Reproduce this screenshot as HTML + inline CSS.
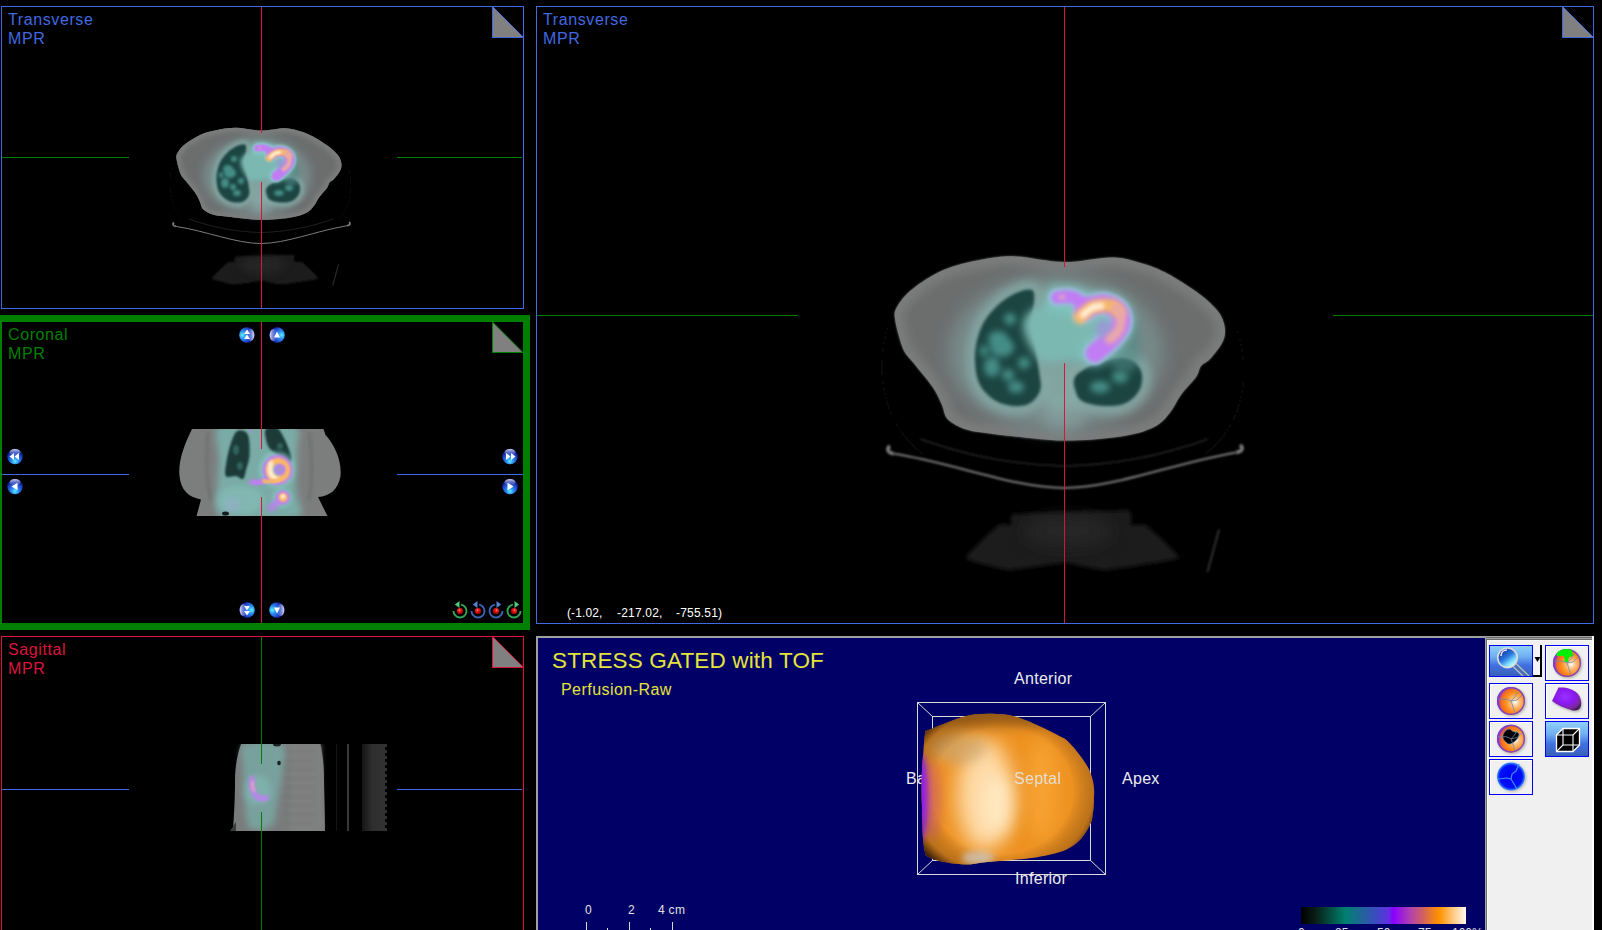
<!DOCTYPE html>
<html><head><meta charset="utf-8">
<style>
html,body{margin:0;padding:0;background:#000;width:1602px;height:930px;overflow:hidden;position:relative;font-family:"Liberation Sans",sans-serif;}
.a{position:absolute;box-sizing:border-box;}
.lbl{position:absolute;font-size:16px;line-height:19px;letter-spacing:0.6px;white-space:nowrap;}
.hl{position:absolute;height:1px;}
.vl{position:absolute;width:1px;}
svg{position:absolute;overflow:visible;}
.t{position:absolute;white-space:nowrap;}
</style></head><body>

<svg width="0" height="0" style="left:0;top:0">
 <defs>
  <radialGradient id="nbH" cx="50%" cy="80%" r="65%">
   <stop offset="0" stop-color="#5ff0ff"/>
   <stop offset="0.35" stop-color="#2a8cf0"/>
   <stop offset="0.75" stop-color="#2040c8"/>
   <stop offset="1" stop-color="#0a1a80"/>
  </radialGradient>
  <linearGradient id="nbHi" x1="0" y1="0" x2="0" y2="1">
   <stop offset="0" stop-color="#e8e8ff" stop-opacity="0.9"/>
   <stop offset="1" stop-color="#8090e0" stop-opacity="0"/>
  </linearGradient>
  <radialGradient id="nbV1" cx="20%" cy="50%" r="70%">
   <stop offset="0" stop-color="#5ff0ff"/>
   <stop offset="0.35" stop-color="#2a8cf0"/>
   <stop offset="0.75" stop-color="#2040c8"/>
   <stop offset="1" stop-color="#0a1a80"/>
  </radialGradient>
  <linearGradient id="nbViR" x1="1" y1="0" x2="0" y2="0">
   <stop offset="0" stop-color="#f0f0ff" stop-opacity="0.95"/>
   <stop offset="1" stop-color="#8090e0" stop-opacity="0"/>
  </linearGradient>
  <radialGradient id="nbV2" cx="80%" cy="50%" r="70%">
   <stop offset="0" stop-color="#5ff0ff"/>
   <stop offset="0.35" stop-color="#2a8cf0"/>
   <stop offset="0.75" stop-color="#2040c8"/>
   <stop offset="1" stop-color="#0a1a80"/>
  </radialGradient>
  <linearGradient id="nbViL" x1="0" y1="0" x2="1" y2="0">
   <stop offset="0" stop-color="#f0f0ff" stop-opacity="0.95"/>
   <stop offset="1" stop-color="#8090e0" stop-opacity="0"/>
  </linearGradient>
  <radialGradient id="ball" cx="40%" cy="35%" r="60%">
   <stop offset="0" stop-color="#ffb0b0"/>
   <stop offset="0.3" stop-color="#ff2020"/>
   <stop offset="1" stop-color="#a00000"/>
  </radialGradient>

  <filter id="bl05" x="-100%" y="-100%" width="300%" height="300%"><feGaussianBlur stdDeviation="0.5"/></filter>
  <filter id="bl06" x="-100%" y="-100%" width="300%" height="300%"><feGaussianBlur stdDeviation="0.6"/></filter>
  <filter id="bl08" x="-100%" y="-100%" width="300%" height="300%"><feGaussianBlur stdDeviation="0.8"/></filter>
  <filter id="bl1" x="-100%" y="-100%" width="300%" height="300%"><feGaussianBlur stdDeviation="1"/></filter>
  <filter id="bl12" x="-100%" y="-100%" width="300%" height="300%"><feGaussianBlur stdDeviation="1.2"/></filter>
  <filter id="bl15" x="-100%" y="-100%" width="300%" height="300%"><feGaussianBlur stdDeviation="1.5"/></filter>
  <filter id="bl2" x="-100%" y="-100%" width="300%" height="300%"><feGaussianBlur stdDeviation="2"/></filter>
  <filter id="bl3" x="-100%" y="-100%" width="300%" height="300%"><feGaussianBlur stdDeviation="3"/></filter>
  <filter id="bl4" x="-100%" y="-100%" width="300%" height="300%"><feGaussianBlur stdDeviation="4"/></filter>
  <filter id="bl6" x="-100%" y="-100%" width="300%" height="300%"><feGaussianBlur stdDeviation="6"/></filter>
  <filter id="bl8" x="-100%" y="-100%" width="300%" height="300%"><feGaussianBlur stdDeviation="8"/></filter>
  <filter id="bl10" x="-100%" y="-100%" width="300%" height="300%"><feGaussianBlur stdDeviation="10"/></filter>
<g id="tbody">
<path d="M -88,5 C -95,30 -90,55 -70,70 M 86,5 C 94,30 90,55 70,70" fill="none" stroke="#0e0e0e" stroke-width="0.7" filter="url(#bl05)"/>
<clipPath id="torsoClip"><path d="M -76.00,-12.80 C -72.08,-15.90 -65.75,-20.13 -60.00,-22.60 C -54.25,-25.07 -47.50,-26.48 -41.50,-27.60 C -35.50,-28.72 -30.92,-29.48 -24.00,-29.30 C -17.08,-29.12 -8.08,-26.58 0.00,-26.50 C 8.08,-26.42 17.83,-28.97 24.50,-28.80 C 31.17,-28.63 35.42,-26.88 40.00,-25.50 C 44.58,-24.12 47.67,-22.80 52.00,-20.50 C 56.33,-18.20 62.33,-14.28 66.00,-11.70 C 69.67,-9.12 71.92,-7.03 74.00,-5.00 C 76.08,-2.97 77.42,-1.58 78.50,0.50 C 79.58,2.58 80.42,5.25 80.50,7.50 C 80.58,9.75 80.25,11.58 79.00,14.00 C 77.75,16.42 74.75,20.08 73.00,22.00 C 71.25,23.92 69.67,24.00 68.50,25.50 C 67.33,27.00 67.68,28.58 66.00,31.00 C 64.32,33.42 60.57,37.04 58.40,40.00 C 56.23,42.96 55.23,46.08 53.00,48.75 C 50.77,51.42 49.08,54.00 45.00,56.00 C 40.92,58.00 36.00,59.62 28.50,60.75 C 21.00,61.88 8.83,62.80 0.00,62.80 C -8.83,62.80 -18.33,61.34 -24.50,60.75 C -30.67,60.16 -33.03,59.81 -37.00,59.25 C -40.97,58.69 -44.80,58.57 -48.30,57.40 C -51.80,56.23 -55.85,54.35 -58.00,52.20 C -60.15,50.05 -59.92,47.20 -61.20,44.50 C -62.48,41.80 -63.33,39.45 -65.70,36.00 C -68.07,32.55 -72.93,27.02 -75.40,23.80 C -77.87,20.58 -79.00,20.25 -80.50,16.70 C -82.00,13.15 -83.90,5.95 -84.40,2.50 C -84.90,-0.95 -84.90,-1.45 -83.50,-4.00 C -82.10,-6.55 -79.92,-9.70 -76.00,-12.80 Z"/></clipPath>
<path d="M -76.00,-12.80 C -72.08,-15.90 -65.75,-20.13 -60.00,-22.60 C -54.25,-25.07 -47.50,-26.48 -41.50,-27.60 C -35.50,-28.72 -30.92,-29.48 -24.00,-29.30 C -17.08,-29.12 -8.08,-26.58 0.00,-26.50 C 8.08,-26.42 17.83,-28.97 24.50,-28.80 C 31.17,-28.63 35.42,-26.88 40.00,-25.50 C 44.58,-24.12 47.67,-22.80 52.00,-20.50 C 56.33,-18.20 62.33,-14.28 66.00,-11.70 C 69.67,-9.12 71.92,-7.03 74.00,-5.00 C 76.08,-2.97 77.42,-1.58 78.50,0.50 C 79.58,2.58 80.42,5.25 80.50,7.50 C 80.58,9.75 80.25,11.58 79.00,14.00 C 77.75,16.42 74.75,20.08 73.00,22.00 C 71.25,23.92 69.67,24.00 68.50,25.50 C 67.33,27.00 67.68,28.58 66.00,31.00 C 64.32,33.42 60.57,37.04 58.40,40.00 C 56.23,42.96 55.23,46.08 53.00,48.75 C 50.77,51.42 49.08,54.00 45.00,56.00 C 40.92,58.00 36.00,59.62 28.50,60.75 C 21.00,61.88 8.83,62.80 0.00,62.80 C -8.83,62.80 -18.33,61.34 -24.50,60.75 C -30.67,60.16 -33.03,59.81 -37.00,59.25 C -40.97,58.69 -44.80,58.57 -48.30,57.40 C -51.80,56.23 -55.85,54.35 -58.00,52.20 C -60.15,50.05 -59.92,47.20 -61.20,44.50 C -62.48,41.80 -63.33,39.45 -65.70,36.00 C -68.07,32.55 -72.93,27.02 -75.40,23.80 C -77.87,20.58 -79.00,20.25 -80.50,16.70 C -82.00,13.15 -83.90,5.95 -84.40,2.50 C -84.90,-0.95 -84.90,-1.45 -83.50,-4.00 C -82.10,-6.55 -79.92,-9.70 -76.00,-12.80 Z" fill="#6c6e6e" filter="url(#bl06)"/>
<g clip-path="url(#torsoClip)"><path d="M -76.00,-12.80 C -72.08,-15.90 -65.75,-20.13 -60.00,-22.60 C -54.25,-25.07 -47.50,-26.48 -41.50,-27.60 C -35.50,-28.72 -30.92,-29.48 -24.00,-29.30 C -17.08,-29.12 -8.08,-26.58 0.00,-26.50 C 8.08,-26.42 17.83,-28.97 24.50,-28.80 C 31.17,-28.63 35.42,-26.88 40.00,-25.50 C 44.58,-24.12 47.67,-22.80 52.00,-20.50 C 56.33,-18.20 62.33,-14.28 66.00,-11.70 C 69.67,-9.12 71.92,-7.03 74.00,-5.00 C 76.08,-2.97 77.42,-1.58 78.50,0.50 C 79.58,2.58 80.42,5.25 80.50,7.50 C 80.58,9.75 80.25,11.58 79.00,14.00 C 77.75,16.42 74.75,20.08 73.00,22.00 C 71.25,23.92 69.67,24.00 68.50,25.50 C 67.33,27.00 67.68,28.58 66.00,31.00 C 64.32,33.42 60.57,37.04 58.40,40.00 C 56.23,42.96 55.23,46.08 53.00,48.75 C 50.77,51.42 49.08,54.00 45.00,56.00 C 40.92,58.00 36.00,59.62 28.50,60.75 C 21.00,61.88 8.83,62.80 0.00,62.80 C -8.83,62.80 -18.33,61.34 -24.50,60.75 C -30.67,60.16 -33.03,59.81 -37.00,59.25 C -40.97,58.69 -44.80,58.57 -48.30,57.40 C -51.80,56.23 -55.85,54.35 -58.00,52.20 C -60.15,50.05 -59.92,47.20 -61.20,44.50 C -62.48,41.80 -63.33,39.45 -65.70,36.00 C -68.07,32.55 -72.93,27.02 -75.40,23.80 C -77.87,20.58 -79.00,20.25 -80.50,16.70 C -82.00,13.15 -83.90,5.95 -84.40,2.50 C -84.90,-0.95 -84.90,-1.45 -83.50,-4.00 C -82.10,-6.55 -79.92,-9.70 -76.00,-12.80 Z" fill="none" stroke="#7a7c7c" stroke-width="9" filter="url(#bl2)"/></g>
<ellipse cx="-4" cy="19" rx="54" ry="39" fill="#7fa09e" opacity="0.55" filter="url(#bl4)"/>
<ellipse cx="0" cy="48" rx="12" ry="10" fill="#8aa6a4" opacity="0.5" filter="url(#bl3)"/>
<ellipse cx="-1" cy="34" rx="11" ry="15" fill="#86aca8" opacity="0.75" filter="url(#bl3)"/>
<path d="M -16.00,-12.50 C -17.50,-13.33 -21.17,-12.25 -24.00,-11.00 C -26.83,-9.75 -30.17,-7.73 -33.00,-5.00 C -35.83,-2.27 -39.08,1.23 -41.00,5.40 C -42.92,9.57 -44.33,15.07 -44.50,20.00 C -44.67,24.93 -44.08,31.00 -42.00,35.00 C -39.92,39.00 -35.83,42.33 -32.00,44.00 C -28.17,45.67 -22.33,46.00 -19.00,45.00 C -15.67,44.00 -13.08,40.83 -12.00,38.00 C -10.92,35.17 -12.08,31.83 -12.50,28.00 C -12.92,24.17 -13.83,19.17 -14.50,15.00 C -15.17,10.83 -16.42,6.50 -16.50,3.00 C -16.58,-0.50 -15.08,-3.42 -15.00,-6.00 C -14.92,-8.58 -14.50,-11.67 -16.00,-12.50 Z" fill="none" stroke="#88aeaa" stroke-width="9" opacity="0.7" filter="url(#bl2)"/>
<path d="M 5.50,31.00 C 6.58,29.17 9.58,27.42 12.00,26.00 C 14.42,24.58 16.67,23.17 20.00,22.50 C 23.33,21.83 28.92,21.08 32.00,22.00 C 35.08,22.92 37.50,25.50 38.50,28.00 C 39.50,30.50 39.25,34.33 38.00,37.00 C 36.75,39.67 34.00,42.58 31.00,44.00 C 28.00,45.42 23.67,45.67 20.00,45.50 C 16.33,45.33 11.42,44.42 9.00,43.00 C 6.58,41.58 6.08,39.00 5.50,37.00 C 4.92,35.00 4.42,32.83 5.50,31.00 Z" fill="none" stroke="#88aeaa" stroke-width="9" opacity="0.7" filter="url(#bl2)"/>
<path d="M -16.00,-12.50 C -17.50,-13.33 -21.17,-12.25 -24.00,-11.00 C -26.83,-9.75 -30.17,-7.73 -33.00,-5.00 C -35.83,-2.27 -39.08,1.23 -41.00,5.40 C -42.92,9.57 -44.33,15.07 -44.50,20.00 C -44.67,24.93 -44.08,31.00 -42.00,35.00 C -39.92,39.00 -35.83,42.33 -32.00,44.00 C -28.17,45.67 -22.33,46.00 -19.00,45.00 C -15.67,44.00 -13.08,40.83 -12.00,38.00 C -10.92,35.17 -12.08,31.83 -12.50,28.00 C -12.92,24.17 -13.83,19.17 -14.50,15.00 C -15.17,10.83 -16.42,6.50 -16.50,3.00 C -16.58,-0.50 -15.08,-3.42 -15.00,-6.00 C -14.92,-8.58 -14.50,-11.67 -16.00,-12.50 Z" fill="#1d4543" filter="url(#bl08)"/>
<path d="M 5.50,31.00 C 6.58,29.17 9.58,27.42 12.00,26.00 C 14.42,24.58 16.67,23.17 20.00,22.50 C 23.33,21.83 28.92,21.08 32.00,22.00 C 35.08,22.92 37.50,25.50 38.50,28.00 C 39.50,30.50 39.25,34.33 38.00,37.00 C 36.75,39.67 34.00,42.58 31.00,44.00 C 28.00,45.42 23.67,45.67 20.00,45.50 C 16.33,45.33 11.42,44.42 9.00,43.00 C 6.58,41.58 6.08,39.00 5.50,37.00 C 4.92,35.00 4.42,32.83 5.50,31.00 Z" fill="#1d4543" filter="url(#bl08)"/>
<g fill="#4a948e" filter="url(#bl15)" opacity="0.9"><ellipse cx="-33" cy="12" rx="5" ry="4"/><ellipse cx="-36" cy="26" rx="4" ry="5"/><ellipse cx="-28" cy="30" rx="3" ry="3"/><ellipse cx="-40" cy="18" rx="2" ry="3"/><ellipse cx="-24" cy="36" rx="4" ry="3"/><ellipse cx="-20" cy="24" rx="3" ry="3"/><ellipse cx="-27" cy="2" rx="3" ry="3"/><ellipse cx="-31" cy="16" rx="6" ry="5"/><ellipse cx="18" cy="36" rx="5" ry="3"/><ellipse cx="28" cy="31" rx="4" ry="3"/></g>
<path d="M 22.00,-2.00 C 23.67,-4.83 27.67,-6.17 30.00,-5.00 C 32.33,-3.83 34.67,0.83 36.00,5.00 C 37.33,9.17 38.33,16.17 38.00,20.00 C 37.67,23.83 36.33,27.00 34.00,28.00 C 31.67,29.00 26.33,28.67 24.00,26.00 C 21.67,23.33 20.33,16.67 20.00,12.00 C 19.67,7.33 20.33,0.83 22.00,-2.00 Z" fill="#4f8a86" opacity="0.6" filter="url(#bl2)"/>
<path d="M -9.75,-6.00 C -7.50,-7.93 -7.54,-11.82 -4.00,-12.80 C -0.46,-13.78 6.65,-12.53 11.50,-11.90 C 16.35,-11.27 21.55,-10.94 25.10,-9.00 C 28.65,-7.06 31.83,-3.65 32.80,-0.25 C 33.77,3.15 33.00,7.69 30.90,11.40 C 28.80,15.11 23.43,19.90 20.20,22.00 C 16.97,24.10 14.87,23.83 11.50,24.00 C 8.13,24.17 3.54,23.00 0.00,23.00 C -3.54,23.00 -7.00,25.13 -9.75,24.00 C -12.50,22.87 -14.72,19.27 -16.50,16.20 C -18.27,13.13 -20.23,8.50 -20.40,5.60 C -20.57,2.70 -19.27,0.73 -17.50,-1.20 C -15.72,-3.13 -12.00,-4.07 -9.75,-6.00 Z" fill="#7cb8b2" filter="url(#bl2)"/>
<path d="M -4.00,-9.00 C -2.38,-8.83 3.43,-8.97 5.70,-8.00 C 7.97,-7.03 8.30,-3.96 9.60,-3.15 C 10.90,-2.34 11.73,-2.83 13.50,-3.15 C 15.27,-3.47 17.95,-5.26 20.20,-5.10 C 22.45,-4.94 25.70,-3.82 27.00,-2.20 C 28.30,-0.58 28.48,2.33 28.00,4.60 C 27.52,6.87 26.20,8.98 24.10,11.40 C 22.00,13.82 16.85,17.82 15.40,19.10 " fill="none" stroke="#86dcd2" stroke-width="14" stroke-linecap="round" stroke-linejoin="round" opacity="0.4" filter="url(#bl2)"/>
<path d="M -3.50,-8.80 C -2.42,-8.87 1.08,-9.50 3.00,-9.20 C 4.92,-8.90 6.67,-7.87 8.00,-7.00 C 9.33,-6.13 10.50,-4.50 11.00,-4.00 " fill="none" stroke="#84d8cc" stroke-width="8.5" stroke-linecap="round" stroke-linejoin="round" filter="url(#bl08)"/>
<path d="M 10.00,-2.00 C 10.67,-2.42 12.30,-3.90 14.00,-4.50 C 15.70,-5.10 18.03,-5.98 20.20,-5.60 C 22.37,-5.22 25.62,-3.90 27.00,-2.20 C 28.38,-0.50 28.98,2.33 28.50,4.60 C 28.02,6.87 26.28,8.98 24.10,11.40 C 21.92,13.82 16.85,17.82 15.40,19.10 " fill="none" stroke="#84d8cc" stroke-width="11.5" stroke-linecap="round" stroke-linejoin="round" filter="url(#bl08)"/>
<path d="M -3.50,-8.80 C -2.42,-8.87 1.08,-9.50 3.00,-9.20 C 4.92,-8.90 6.67,-7.87 8.00,-7.00 C 9.33,-6.13 10.50,-4.50 11.00,-4.00 " fill="none" stroke="#c27cf4" stroke-width="7" stroke-linecap="round" stroke-linejoin="round" filter="url(#bl12)"/>
<path d="M 10.00,-2.00 C 10.67,-2.42 12.30,-3.90 14.00,-4.50 C 15.70,-5.10 18.03,-5.98 20.20,-5.60 C 22.37,-5.22 25.62,-3.90 27.00,-2.20 C 28.38,-0.50 28.98,2.33 28.50,4.60 C 28.02,6.87 26.28,8.98 24.10,11.40 C 21.92,13.82 16.85,17.82 15.40,19.10 " fill="none" stroke="#c27cf4" stroke-width="10" stroke-linecap="round" stroke-linejoin="round" filter="url(#bl12)"/>
<ellipse cx="-1" cy="-9" rx="2" ry="1.5" fill="#e0a0c8" opacity="0.7" filter="url(#bl08)"/>
<ellipse cx="20" cy="7" rx="4.5" ry="5" fill="#9a96d4" opacity="0.85" filter="url(#bl15)"/>
<path d="M 8.00,1.20 C 9.08,0.33 11.83,-3.03 14.50,-4.00 C 17.17,-4.97 21.83,-5.02 24.00,-4.60 C 26.17,-4.18 26.92,-2.02 27.50,-1.50 " fill="none" stroke="#f8b868" stroke-width="6.5" stroke-linecap="round" stroke-linejoin="round" filter="url(#bl12)"/>
<path d="M 26.00,-3.50 C 26.43,-2.93 28.37,-1.95 28.60,-0.10 C 28.83,1.75 28.35,5.55 27.40,7.60 C 26.45,9.65 23.65,11.43 22.90,12.20 " fill="none" stroke="#eaa8a8" stroke-width="4.8" stroke-linecap="round" stroke-linejoin="round" filter="url(#bl12)"/>
<path d="M 9.50,0.00 C 10.25,-0.60 12.50,-2.83 14.00,-3.60 C 15.50,-4.37 17.75,-4.43 18.50,-4.60 " fill="none" stroke="#fff0dc" stroke-width="3.2" stroke-linecap="round" filter="url(#bl1)"/>
<path d="M -85,69.4 C -55,74 -25,86.5 0,86.5 C 25,86.5 55,74 86,68.7" fill="none" stroke="#7c7c7c" stroke-width="1.0" filter="url(#bl05)"/>
<path d="M -72,62 C -50,70 -25,75 0,75.5 C 25,75 50,70 72,62" fill="none" stroke="#262626" stroke-width="0.8" filter="url(#bl05)"/>
<path d="M -85,69.4 C -88,69 -89,67 -87,65.5" fill="none" stroke="#7a7a7a" stroke-width="1.8" filter="url(#bl05)"/>
<path d="M 86,68.7 C 89,68.5 90,66.5 88,65" fill="none" stroke="#7a7a7a" stroke-width="1.8" filter="url(#bl05)"/>
<path d="M -25.60,99.60 C -24.12,99.27 0.10,98.59 3.00,98.50 C 5.90,98.41 30.96,97.47 32.50,97.80 C 34.03,98.12 33.29,104.64 33.70,105.00 C 34.12,105.36 39.61,104.17 40.80,105.00 C 41.99,105.83 58.52,120.38 57.50,121.50 C 56.48,122.62 23.35,127.38 20.50,127.50 C 17.65,127.62 2.92,124.00 0.50,124.00 C -1.92,124.00 -25.51,127.62 -28.00,127.50 C -30.49,127.38 -49.06,122.62 -49.30,121.50 C -49.53,120.38 -33.83,105.83 -32.70,105.00 C -31.57,104.17 -27.05,105.27 -26.70,105.00 C -26.34,104.73 -27.09,99.92 -25.60,99.60 Z" fill="#1e1e1e" filter="url(#bl1)"/>
<ellipse cx="2" cy="108" rx="22" ry="8" fill="#2c2c2c" opacity="0.7" filter="url(#bl4)"/>
<path d="M 77.5,107.3 L 71.7,128.6" stroke="#2a2a2a" stroke-width="1.2" filter="url(#bl05)"/>
</g>

 </defs>
</svg>

<svg style="left:0;top:0;" width="1602" height="930">
 <use href="#tbody" transform="translate(261,157)"/>
 <use href="#tbody" transform="translate(1064,315) scale(2)"/>
<clipPath id="corClip"><rect x="150" y="429" width="220" height="87"/></clipPath>
<g clip-path="url(#corClip)">
<path d="M 192,424 L 192,429 C 184,445 178,462 179.5,476 C 181,490 188,497 201,499.5 L 195.5,520 L 329.5,520 L 318,497 C 330,496 338,490 340.5,476 C 342,460 334,444 325.5,435 L 323.5,429 L 323.5,424 Z" fill="#7c7e7e" filter="url(#bl05)"/>
<path d="M 208,432 C 206,455 206,480 211,500" stroke="#646666" stroke-width="3" fill="none" opacity="0.5" filter="url(#bl15)"/>
<path d="M 309,432 C 312,455 313,480 309,500" stroke="#646666" stroke-width="3" fill="none" opacity="0.5" filter="url(#bl15)"/>
<path d="M 217.00,429.00 C 220.50,423.33 227.17,426.50 240.00,426.00 C 252.83,425.50 284.50,422.00 294.00,426.00 C 303.50,430.00 296.67,439.33 297.00,450.00 C 297.33,460.67 295.50,479.00 296.00,490.00 C 296.50,501.00 305.67,511.00 300.00,516.00 C 294.33,521.00 275.33,520.00 262.00,520.00 C 248.67,520.00 227.50,521.00 220.00,516.00 C 212.50,511.00 217.17,499.33 217.00,490.00 C 216.83,480.67 219.00,470.17 219.00,460.00 C 219.00,449.83 213.50,434.67 217.00,429.00 Z" fill="#7ab4ae" opacity="0.85" filter="url(#bl3)"/>
<path d="M 237.40,431.00 C 240.18,429.58 245.68,430.50 247.70,434.50 C 249.72,438.50 249.78,449.08 249.50,455.00 C 249.22,460.92 247.08,466.00 246.00,470.00 C 244.92,474.00 244.67,478.00 243.00,479.00 C 241.33,480.00 238.87,476.50 236.00,476.00 C 233.13,475.50 227.38,478.40 225.80,476.00 C 224.22,473.60 225.63,467.10 226.50,461.60 C 227.37,456.10 229.18,448.10 231.00,443.00 C 232.82,437.90 234.62,432.42 237.40,431.00 Z" fill="#1a3a39" filter="url(#bl08)"/>
<path d="M 266.00,429.00 C 267.87,427.27 273.83,426.17 277.00,428.00 C 280.17,429.83 282.70,435.33 285.00,440.00 C 287.30,444.67 290.05,452.33 290.80,456.00 C 291.55,459.67 291.30,462.00 289.50,462.00 C 287.70,462.00 283.25,458.17 280.00,456.00 C 276.75,453.83 272.37,451.93 270.00,449.00 C 267.63,446.07 266.47,441.73 265.80,438.40 C 265.13,435.07 264.13,430.73 266.00,429.00 Z" fill="#1a3a39" filter="url(#bl08)"/>
<g fill="#3a7470" opacity="0.7" filter="url(#bl1)"><ellipse cx="236" cy="450" rx="3" ry="5"/><ellipse cx="240" cy="466" rx="3" ry="4"/><ellipse cx="280" cy="446" rx="3" ry="3"/></g>
<ellipse cx="240" cy="500" rx="24" ry="14" fill="#86c0ba" opacity="0.6" filter="url(#bl3)"/>
<ellipse cx="232" cy="505" rx="8" ry="8" fill="#a0a8d8" opacity="0.35" filter="url(#bl2)"/>
<g>
<circle cx="277" cy="469.5" r="18" fill="#88d8cc" opacity="0.55" filter="url(#bl2)"/>
<path d="M 266,480 C 260,483 255,483 252,482" stroke="#c27cf4" stroke-width="5.5" stroke-linecap="round" fill="none" filter="url(#bl15)"/>
<circle cx="277.5" cy="470" r="11.5" fill="none" stroke="#c27cf4" stroke-width="7" filter="url(#bl15)"/>
<circle cx="278" cy="470" r="9" fill="none" stroke="#f8b868" stroke-width="6.5" filter="url(#bl1)"/>
<path d="M 271,463 C 269,470 270,476 276,479" stroke="#fff0d8" stroke-width="4.5" stroke-linecap="round" fill="none" filter="url(#bl15)"/>
<path d="M 264,481 C 268,482 272,482 278,480" stroke="#f8b868" stroke-width="4" stroke-linecap="round" fill="none" filter="url(#bl12)"/>
<circle cx="280" cy="469.5" r="5.5" fill="#c27cf4" filter="url(#bl1)"/><circle cx="280" cy="469.5" r="3" fill="#9a98d0" filter="url(#bl08)"/>
</g>
<circle cx="282" cy="498" r="10" fill="#88d8cc" opacity="0.5" filter="url(#bl2)"/>
<path d="M 282,498 L 271,508" stroke="#c27cf4" stroke-width="7" stroke-linecap="round" fill="none" opacity="0.85" filter="url(#bl2)"/>
<circle cx="283" cy="497.5" r="7" fill="#c27cf4" filter="url(#bl12)"/>
<circle cx="283" cy="497.5" r="4.6" fill="#f8b868" filter="url(#bl1)"/>
<circle cx="283" cy="496.5" r="2.2" fill="#fff0d8" filter="url(#bl08)"/>
<circle cx="250.5" cy="431" r="1.8" fill="#b888e8" opacity="0.8" filter="url(#bl08)"/>
<ellipse cx="225.5" cy="513.5" rx="3.5" ry="2" fill="#141c1c" filter="url(#bl05)"/>
</g>

<clipPath id="sagClip"><rect x="200" y="744" width="200" height="87"/></clipPath>
<g clip-path="url(#sagClip)">
<path d="M 241,740 L 241,744 C 237,755 235,768 235,780 C 235,800 234,815 233,831 L 233,836 L 325,836 L 325,831 C 325,810 324,790 324,777 C 324,762 322,752 320.5,744 L 320.5,740 Z" fill="#7a7c7c" filter="url(#bl05)"/>
<path d="M 230,831 L 236,822 L 236,831 Z" fill="#3a3a3a" filter="url(#bl05)"/>
<rect x="290" y="744" width="32" height="87" fill="#848484" opacity="0.6" filter="url(#bl2)"/>
<g fill="#5e6464" opacity="0.18" filter="url(#bl15)"><rect x="284" y="750" width="30" height="2.5"/><rect x="284" y="759" width="30" height="2.5"/><rect x="284" y="768" width="30" height="2.5"/><rect x="284" y="777" width="30" height="2.5"/><rect x="284" y="786" width="30" height="2.5"/><rect x="284" y="795" width="30" height="2.5"/><rect x="284" y="804" width="30" height="2.5"/><rect x="284" y="813" width="30" height="2.5"/><rect x="284" y="822" width="30" height="2.5"/></g>
<path d="M 244.00,744.00 C 250.50,739.67 275.50,739.67 282.00,744.00 C 288.50,748.33 283.67,760.67 283.00,770.00 C 282.33,779.33 279.83,790.83 278.00,800.00 C 276.17,809.17 276.67,820.33 272.00,825.00 C 267.33,829.67 254.67,832.17 250.00,828.00 C 245.33,823.83 245.17,809.67 244.00,800.00 C 242.83,790.33 243.00,779.33 243.00,770.00 C 243.00,760.67 237.50,748.33 244.00,744.00 Z" fill="#78b0ac" opacity="0.7" filter="url(#bl3)"/>
<ellipse cx="258" cy="790" rx="13" ry="15" fill="#86c6be" opacity="0.45" filter="url(#bl3)"/>
<path d="M 252,779 C 251,786 252,792 257,797 C 260,799 263,799 266,798" stroke="#bc82f0" stroke-width="6" stroke-linecap="round" fill="none" opacity="0.9" filter="url(#bl15)"/>
<path d="M 252.5,782 C 252,786 253,789 254,791" stroke="#e8a2c0" stroke-width="2.5" stroke-linecap="round" fill="none" filter="url(#bl08)"/>
<ellipse cx="279" cy="763" rx="1.8" ry="2.2" fill="#1a2020" filter="url(#bl05)"/>
<ellipse cx="277" cy="744" rx="4" ry="2.5" fill="#1a2020" filter="url(#bl05)"/>
</g>
<rect x="336" y="744" width="1" height="87" fill="#141414"/>
<rect x="347" y="744" width="2" height="87" fill="#383838"/>
<defs><linearGradient id="sgStripe" x1="0" x2="1"><stop offset="0" stop-color="#141414"/><stop offset="0.4" stop-color="#2e2e2e"/><stop offset="1" stop-color="#323232"/></linearGradient></defs>
<polygon points="362,744 386,744 387,744 387,747 385,747 385,750 387,750 387,753 385,753 385,756 387,756 387,759 385,759 385,762 387,762 387,765 385,765 385,768 387,768 387,771 385,771 385,774 387,774 387,777 385,777 385,780 387,780 387,783 385,783 385,786 387,786 387,789 385,789 385,792 387,792 387,795 385,795 385,798 387,798 387,801 385,801 385,804 387,804 387,807 385,807 385,810 387,810 387,813 385,813 385,816 387,816 387,819 385,819 385,822 387,822 387,825 385,825 385,828 387,828 387,831 386,831 362,831" fill="url(#sgStripe)"/>

</svg>

<!-- ===== Panel 1: Transverse small ===== -->
<div class="a" style="left:1px;top:6px;width:523px;height:303px;border:1px solid #4169e1;"></div>
<div class="lbl" style="left:8px;top:10px;color:#4169e1;">Transverse<br>MPR</div>
<div class="hl" style="left:2px;top:157px;width:127px;background:#008000;"></div>
<div class="hl" style="left:397px;top:157px;width:125px;background:#008000;"></div>
<div class="vl" style="left:261px;top:7px;height:126px;background:#dc143c;"></div>
<div class="vl" style="left:261px;top:182px;height:126px;background:#dc143c;"></div>

<!-- ===== Panel 2: Coronal ===== -->
<div class="a" style="left:-5px;top:315px;width:535px;height:315px;border:7px solid #008000;"></div>
<div class="lbl" style="left:8px;top:325px;color:#008000;">Coronal<br>MPR</div>
<div class="hl" style="left:2px;top:474px;width:127px;background:#4169e1;"></div>
<div class="hl" style="left:397px;top:474px;width:126px;background:#4169e1;"></div>
<div class="vl" style="left:261px;top:322px;height:127px;background:#dc143c;"></div>
<div class="vl" style="left:261px;top:497px;height:126px;background:#dc143c;"></div>

<!-- ===== Panel 3: Sagittal ===== -->
<div class="a" style="left:1px;top:636px;width:523px;height:320px;border:1px solid #dc143c;"></div>
<div class="lbl" style="left:8px;top:640px;color:#dc143c;">Sagittal<br>MPR</div>
<div class="hl" style="left:2px;top:789px;width:127px;background:#4169e1;"></div>
<div class="hl" style="left:397px;top:789px;width:125px;background:#4169e1;"></div>
<div class="vl" style="left:261px;top:637px;height:127px;background:#008000;"></div>
<div class="vl" style="left:261px;top:812px;height:120px;background:#008000;"></div>

<!-- ===== Panel 4: big transverse ===== -->
<div class="a" style="left:536px;top:6px;width:1058px;height:618px;border:1px solid #4169e1;"></div>
<div class="lbl" style="left:543px;top:10px;color:#4169e1;">Transverse<br>MPR</div>
<div class="hl" style="left:537px;top:315px;width:261px;background:#008000;"></div>
<div class="hl" style="left:1333px;top:315px;width:260px;background:#008000;"></div>
<div class="vl" style="left:1064px;top:7px;height:260px;background:#dc143c;"></div>
<div class="vl" style="left:1064px;top:363px;height:260px;background:#dc143c;"></div>
<div class="t" style="left:567px;top:606px;font-size:12px;line-height:14px;color:#fff;letter-spacing:0.1px;">(-1.02,</div>
<div class="t" style="left:617px;top:606px;font-size:12px;line-height:14px;color:#fff;letter-spacing:0.2px;">-217.02,</div>
<div class="t" style="left:676px;top:606px;font-size:12px;line-height:14px;color:#fff;letter-spacing:0.2px;">-755.51)</div>

<!-- corner triangles -->
<svg style="left:0;top:0;" width="1602" height="930">
 <g fill="#808080" stroke-width="1">
  <polygon points="492.5,6.5 492.5,37.5 523.5,37.5" stroke="#4169e1"/>
  <polygon points="492.5,322 492.5,352.5 523,352.5" stroke="#008000"/>
  <polygon points="492.5,636.5 492.5,667.5 523.5,667.5" stroke="#dc143c"/>
  <polygon points="1562.5,6.5 1562.5,37.5 1593.5,37.5" stroke="#4169e1"/>
 </g>
</svg>

<!-- nav buttons -->
<svg style="left:0;top:0;" width="1602" height="930">
 <g id="btnL" transform="translate(15,456.5)">
  <circle r="7.8" fill="url(#nbH)"/>
  <ellipse cx="0" cy="-4" rx="5.5" ry="3.5" fill="url(#nbHi)"/>
  <polygon points="-5.5,0 -1,-3.5 -1,3.5" fill="#fff"/>
  <polygon points="-0.5,0 4,-3.5 4,3.5" fill="#fff"/>
 </g>
 <g transform="translate(15,486.5)">
  <circle r="7.8" fill="url(#nbH)"/>
  <ellipse cx="0" cy="-4" rx="5.5" ry="3.5" fill="url(#nbHi)"/>
  <polygon points="-3.5,0 2.5,-3.8 2.5,3.8" fill="#fff"/>
 </g>
 <g transform="translate(510,456.5)">
  <circle r="7.8" fill="url(#nbH)"/>
  <ellipse cx="0" cy="-4" rx="5.5" ry="3.5" fill="url(#nbHi)"/>
  <polygon points="5.5,0 1,-3.5 1,3.5" fill="#fff"/>
  <polygon points="0.5,0 -4,-3.5 -4,3.5" fill="#fff"/>
 </g>
 <g transform="translate(510,486.5)">
  <circle r="7.8" fill="url(#nbH)"/>
  <ellipse cx="0" cy="-4" rx="5.5" ry="3.5" fill="url(#nbHi)"/>
  <polygon points="3.5,0 -2.5,-3.8 -2.5,3.8" fill="#fff"/>
 </g>
 <!-- top -->
 <g transform="translate(247,335)">
  <circle r="7.8" fill="url(#nbV1)"/>
  <ellipse cx="3.5" cy="0" rx="3.8" ry="6" fill="url(#nbViR)"/>
  <polygon points="0,-5.5 -3,-1 3,-1" fill="#fff"/>
  <polygon points="0,-0.5 -3,4 3,4" fill="#fff"/>
 </g>
 <g transform="translate(277,335)">
  <circle r="7.8" fill="url(#nbV2)"/>
  <ellipse cx="-3.5" cy="0" rx="3.8" ry="6" fill="url(#nbViL)"/>
  <polygon points="0,-3.5 -3,2.5 3,2.5" fill="#fff"/>
 </g>
 <!-- bottom -->
 <g transform="translate(247,610)">
  <circle r="7.8" fill="url(#nbV2)"/>
  <ellipse cx="-3.5" cy="0" rx="3.8" ry="6" fill="url(#nbViL)"/>
  <polygon points="0,0.5 -3,-4 3,-4" fill="#fff"/>
  <polygon points="0,5.5 -3,1 3,1" fill="#fff"/>
 </g>
 <g transform="translate(277,610)">
  <circle r="7.8" fill="url(#nbV1)"/>
  <ellipse cx="3.5" cy="0" rx="3.8" ry="6" fill="url(#nbViR)"/>
  <polygon points="0,3.5 -3,-2.5 3,-2.5" fill="#fff"/>
 </g>
 <!-- rotation icons -->
 <g transform="translate(460,611)" fill="none" stroke-width="1.9">
  <path d="M 1.1,-6.4 A 6.5,6.5 0 1 1 -6.5,0" stroke="#30a858"/>
  <polygon points="-5.2,-6.5 -0.5,-10 -0.5,-3" fill="#50c878" stroke="none"/>
  <circle cx="0" cy="0" r="3.1" fill="url(#ball)" stroke="none"/>
 </g>
 <g transform="translate(478,611)" fill="none" stroke-width="1.9">
  <path d="M 1.1,-6.4 A 6.5,6.5 0 1 1 -6.5,0" stroke="#3a64b8"/>
  <polygon points="-5.2,-6.5 -0.5,-10 -0.5,-3" fill="#5a80d0" stroke="none"/>
  <circle cx="0" cy="0" r="3.1" fill="url(#ball)" stroke="none"/>
 </g>
 <g transform="translate(496,611) scale(-1,1)" fill="none" stroke-width="1.9">
  <path d="M 1.1,-6.4 A 6.5,6.5 0 1 1 -6.5,0" stroke="#3a64b8"/>
  <polygon points="-5.2,-6.5 -0.5,-10 -0.5,-3" fill="#5a80d0" stroke="none"/>
  <circle cx="0" cy="0" r="3.1" fill="url(#ball)" stroke="none"/>
 </g>
 <g transform="translate(514,611) scale(-1,1)" fill="none" stroke-width="1.9">
  <path d="M 1.1,-6.4 A 6.5,6.5 0 1 1 -6.5,0" stroke="#30a858"/>
  <polygon points="-5.2,-6.5 -0.5,-10 -0.5,-3" fill="#50c878" stroke="none"/>
  <circle cx="0" cy="0" r="3.1" fill="url(#ball)" stroke="none"/>
 </g>
</svg>

<!-- ===== Panel 5: bottom right ===== -->
<div class="a" style="left:536px;top:636px;width:1058px;height:300px;background:#000066;border-top:2px solid #a0a0a0;border-left:2px solid #a0a0a0;"></div>
<div class="t" style="left:552px;top:647px;font-size:22.5px;line-height:27px;letter-spacing:0.15px;color:#e4e43a;">STRESS GATED with TOF</div>
<div class="t" style="left:561px;top:680px;font-size:16px;line-height:19px;letter-spacing:0.45px;color:#e4e43a;">Perfusion-Raw</div>

<div style="position:absolute;white-space:nowrap;font-size:16px;line-height:19px;letter-spacing:0.3px;color:#ececec;left:906px;top:769px;">Base</div>
<svg style="left:0;top:0;" width="1602" height="930">
<defs>
 <radialGradient id="hg1" cx="0.45" cy="0.5" r="0.6">
  <stop offset="0" stop-color="#ffe6bc"/>
  <stop offset="0.35" stop-color="#f8c880"/>
  <stop offset="0.7" stop-color="#ee9a2a"/>
  <stop offset="0.92" stop-color="#c07020"/>
  <stop offset="1" stop-color="#6a4010"/>
 </radialGradient>
 <radialGradient id="hgEdge" cx="0.47" cy="0.52" r="0.56">
  <stop offset="0" stop-color="#000" stop-opacity="0"/>
  <stop offset="0.68" stop-color="#000" stop-opacity="0"/>
  <stop offset="0.88" stop-color="#4a2808" stop-opacity="0.3"/>
  <stop offset="1" stop-color="#2a1404" stop-opacity="0.9"/>
 </radialGradient>
 <linearGradient id="hgP" x1="0" x2="1">
  <stop offset="0" stop-color="#8a18f0"/>
  <stop offset="0.5" stop-color="#b04aa0" stop-opacity="0.7"/>
  <stop offset="1" stop-color="#f09020" stop-opacity="0"/>
 </linearGradient>
 <clipPath id="hclip"><path id="hpath" d="M 925.5,731 C 940,726 960,716 973.9,714.5 C 990,713 1008,714 1018.4,717.4 C 1032,722 1052,732 1065,738.7 C 1072,745 1076,750 1080.4,756 C 1087,765 1090,770 1092,777.4 C 1094,785 1094.5,790 1094,796.8 C 1094,808 1093,813 1092,820 C 1089,828 1085,834 1080.4,839.4 C 1075,845 1070,848 1063,851 C 1050,855 1040,857 1026,858.8 C 1010,860 1000,861 991.3,861.7 C 980,862.5 975,864 968,864.6 C 955,864 945,862.5 939,860.7 C 932,859 928,857 925.5,854.9 C 923,845 922.5,835 922.6,825.8 C 922,810 921.5,795 921.6,781.3 C 921.8,770 922.5,760 923.6,750.3 C 924,742 924.5,736 925.5,731 Z"/></clipPath>
</defs>
<g fill="none" stroke="#d8d8d8" stroke-width="1" shape-rendering="crispEdges">
<rect x="917.5" y="702.5" width="188" height="172"/>
<rect x="932.5" y="716.5" width="158" height="144"/>
</g>
<g stroke="#d8d8d8" stroke-width="1">
<line x1="917.5" y1="702.5" x2="932.5" y2="716.5"/><line x1="1105.5" y1="702.5" x2="1090.5" y2="716.5"/>
<line x1="917.5" y1="874.5" x2="932.5" y2="860.5"/><line x1="1105.5" y1="874.5" x2="1090.5" y2="860.5"/>
</g>
<g clip-path="url(#hclip)">
<rect x="915" y="705" width="185" height="165" fill="#ee9222"/>
<ellipse cx="1042" cy="790" rx="16" ry="50" fill="#fbac3c" opacity="0.6" filter="url(#bl8)"/>
<ellipse cx="985" cy="795" rx="28" ry="56" fill="#ffe0b0" opacity="0.95" filter="url(#bl10)"/>
<ellipse cx="998" cy="805" rx="14" ry="30" fill="#ffecc8" opacity="0.8" filter="url(#bl8)"/>
<ellipse cx="990" cy="714" rx="80" ry="14" fill="#8a5418" opacity="0.6" filter="url(#bl6)"/>
<ellipse cx="958" cy="748" rx="28" ry="16" fill="#c8a878" opacity="0.6" filter="url(#bl6)"/>
<rect x="915" y="705" width="185" height="165" fill="url(#hgEdge)"/>
<ellipse cx="919" cy="797" rx="10" ry="44" fill="#8a18f4" filter="url(#bl3)"/><ellipse cx="933" cy="800" rx="8" ry="40" fill="#c05080" opacity="0.45" filter="url(#bl4)"/>
<ellipse cx="978" cy="858" rx="16" ry="7" fill="#ccc8c4" opacity="0.75" filter="url(#bl3)"/>
</g>
</svg>
<div style="position:absolute;white-space:nowrap;font-size:16px;line-height:19px;letter-spacing:0.3px;color:#ececec;left:1014px;top:669px;">Anterior</div>
<div style="position:absolute;white-space:nowrap;font-size:16px;line-height:19px;letter-spacing:0.3px;color:#ececec;left:1014px;top:769px;color:#e4ecf0;opacity:0.85;">Septal</div>
<div style="position:absolute;white-space:nowrap;font-size:16px;line-height:19px;letter-spacing:0.3px;color:#ececec;left:1122px;top:769px;">Apex</div>
<div style="position:absolute;white-space:nowrap;font-size:16px;line-height:19px;letter-spacing:0.3px;color:#ececec;left:1015px;top:869px;">Inferior</div>
<div style="position:absolute;white-space:nowrap;font-size:12px;line-height:14px;color:#e0e0e0;left:585px;top:903px;">0</div>
<div style="position:absolute;white-space:nowrap;font-size:12px;line-height:14px;color:#e0e0e0;left:628px;top:903px;">2</div>
<div style="position:absolute;white-space:nowrap;font-size:12px;line-height:14px;color:#e0e0e0;left:658px;top:903px;letter-spacing:0.3px;">4 cm</div>
<div style="position:absolute;left:586px;top:922px;width:1px;height:8px;background:#d8d8d8;"></div>
<div style="position:absolute;left:629px;top:922px;width:1px;height:8px;background:#d8d8d8;"></div>
<div style="position:absolute;left:672px;top:922px;width:1px;height:8px;background:#d8d8d8;"></div>
<div style="position:absolute;left:607px;top:928px;width:1px;height:2px;background:#d8d8d8;"></div>
<div style="position:absolute;left:650px;top:928px;width:1px;height:2px;background:#d8d8d8;"></div>
<div style="position:absolute;left:1301px;top:907px;width:165px;height:17px;background:linear-gradient(to right,#000000 0%,#0a1a14 8%,#025a4c 20%,#008070 27%,#1a6a90 35%,#3a4cc0 45%,#6030e0 53%,#8a00ff 56%,#b040b0 66%,#d06060 74%,#f08020 80%,#ff9400 84%,#ffc880 92%,#fff8f0 100%);"></div>
<div style="position:absolute;white-space:nowrap;font-size:12px;line-height:14px;color:#e0e0e0;left:1298px;top:926px;">0</div>
<div style="position:absolute;white-space:nowrap;font-size:12px;line-height:14px;color:#e0e0e0;left:1335px;top:926px;">25</div>
<div style="position:absolute;white-space:nowrap;font-size:12px;line-height:14px;color:#e0e0e0;left:1377px;top:926px;">50</div>
<div style="position:absolute;white-space:nowrap;font-size:12px;line-height:14px;color:#e0e0e0;left:1418px;top:926px;">75</div>
<div style="position:absolute;white-space:nowrap;font-size:12px;line-height:14px;color:#e0e0e0;left:1452px;top:926px;">100%</div>

<!-- toolbar -->
<div class="a" style="left:1485px;top:636px;width:109px;height:300px;background:#a0a0a0;"></div>
<div class="a" style="left:1486px;top:637px;width:108px;height:300px;background:#707070;"></div>
<div class="a" style="left:1486px;top:638px;width:107px;height:300px;background:#a0a0a0;"></div>
<div class="a" style="left:1486px;top:639px;width:106px;height:300px;background:#707070;"></div>
<div class="a" style="left:1487px;top:640px;width:105px;height:300px;background:#f8f8f8;"></div>
<div class="a" style="left:1488px;top:641px;width:104px;height:300px;background:#f0f0f0;"></div>
<div class="a" style="left:1592px;top:636px;width:2px;height:300px;background:#ffffff;"></div>

<div style="position:absolute;box-sizing:border-box;border:1px solid #0000ff;background:linear-gradient(to bottom,#90d0fa 0%,#70b0f0 35%,#4070e0 65%,#3a60b8 100%);left:1489px;top:645px;width:44px;height:32px;"></div>
<div style="position:absolute;box-sizing:border-box;left:1533px;top:645px;width:9px;height:32px;border-right:2px solid #000;border-bottom:2px solid #000;background:#f4f4f4;"></div>
<div style="position:absolute;box-sizing:border-box;border:1px solid #0000ff;background:#f0f0f0;box-shadow:inset 1px 1px 0 #fffff4;left:1545px;top:645px;width:44px;height:36px;"></div>
<div style="position:absolute;box-sizing:border-box;border:1px solid #0000ff;background:#f0f0f0;box-shadow:inset 1px 1px 0 #fffff4;left:1489px;top:683px;width:44px;height:36px;"></div>
<div style="position:absolute;box-sizing:border-box;border:1px solid #0000ff;background:#f0f0f0;box-shadow:inset 1px 1px 0 #fffff4;left:1545px;top:683px;width:44px;height:36px;"></div>
<div style="position:absolute;box-sizing:border-box;border:1px solid #0000ff;background:#f0f0f0;box-shadow:inset 1px 1px 0 #fffff4;left:1489px;top:721px;width:44px;height:36px;"></div>
<div style="position:absolute;box-sizing:border-box;border:1px solid #0000ff;background:linear-gradient(to bottom,#90d0fa 0%,#70b0f0 35%,#4070e0 65%,#3a60b8 100%);left:1545px;top:721px;width:44px;height:36px;"></div>
<div style="position:absolute;box-sizing:border-box;border:1px solid #0000ff;background:#f0f0f0;box-shadow:inset 1px 1px 0 #fffff4;left:1489px;top:759px;width:44px;height:36px;"></div>
<svg style="left:0;top:0;" width="1602" height="930">
<defs>
 <radialGradient id="tbOr" cx="0.65" cy="0.55" r="0.6">
  <stop offset="0" stop-color="#ffffff"/>
  <stop offset="0.25" stop-color="#ffc080"/>
  <stop offset="0.6" stop-color="#ff8a1a"/>
  <stop offset="0.85" stop-color="#f06a20"/>
  <stop offset="1" stop-color="#9a30d0"/>
 </radialGradient>
 <linearGradient id="tbGl" x1="0.2" y1="0.1" x2="0.8" y2="0.9">
  <stop offset="0" stop-color="#1a3aa0"/>
  <stop offset="0.45" stop-color="#2a78e0"/>
  <stop offset="0.8" stop-color="#80e0ff"/>
  <stop offset="1" stop-color="#c0f4ff"/>
 </linearGradient>
 <radialGradient id="tbBl" cx="0.5" cy="0.5" r="0.5">
  <stop offset="0" stop-color="#0000f0"/>
  <stop offset="0.8" stop-color="#0010f8"/>
  <stop offset="1" stop-color="#3a90ff"/>
 </radialGradient>
 <radialGradient id="tbPu" cx="0.45" cy="0.4" r="0.65">
  <stop offset="0" stop-color="#9a30ff"/>
  <stop offset="0.5" stop-color="#8a18f0"/>
  <stop offset="0.85" stop-color="#7a2a9a"/>
  <stop offset="1" stop-color="#4a1860"/>
 </radialGradient>
 <clipPath id="magClip"><rect x="1490" y="646" width="42" height="30"/></clipPath>
</defs>
<g clip-path="url(#magClip)">
<line x1="1515" y1="665.5" x2="1528" y2="678" stroke="#b8c0c8" stroke-width="5.5" stroke-linecap="round"/>
<line x1="1515" y1="665.5" x2="1528" y2="678" stroke="#4a70b0" stroke-width="3" stroke-linecap="round"/>
<circle cx="1507.5" cy="657.8" r="10.6" fill="#dcdcdc"/>
<circle cx="1507.5" cy="657.8" r="9" fill="url(#tbGl)"/>
<path d="M 1501,656 C 1501,652 1504,650 1507,650" stroke="#fff" stroke-width="1.6" fill="none" opacity="0.9"/>
</g>
<polygon points="1534.5,657 1540.5,657 1537.5,662" fill="#000"/>
<g><circle cx="1568.0" cy="664.0" r="14.5" fill="#888" opacity="0.5" filter="url(#bl08)"/><circle cx="1567.0" cy="663.0" r="14" fill="url(#tbOr)"/><circle cx="1567.0" cy="663.0" r="13.3" fill="none" stroke="#7040d0" stroke-width="1.4" opacity="0.9"/><path d="M 1556,655 C 1558,650 1563,649 1567,649 L 1572,650 L 1573,656 L 1569,657 L 1568,662 L 1565,662 L 1564,656 L 1557,656 Z" fill="#00ee00"/><g stroke="#6a8cb0" stroke-width="0.9" fill="none" opacity="0.85"><path d="M 1567.0,663.0 l 3,-3 l 4,-6" /><path d="M 1567.0,663.0 l -5,-2 l -8,0" /><path d="M 1567.0,663.0 l 2,6 l 2,6" /><path d="M 1567.0,663.0 l 6,-1 l 5,-5" /></g></g>
<g><circle cx="1512.0" cy="702.0" r="14.5" fill="#888" opacity="0.5" filter="url(#bl08)"/><circle cx="1511.0" cy="701.0" r="14" fill="url(#tbOr)"/><circle cx="1511.0" cy="701.0" r="13.3" fill="none" stroke="#7040d0" stroke-width="1.4" opacity="0.9"/><g stroke="#6a8cb0" stroke-width="0.9" fill="none" opacity="0.85"><path d="M 1511.0,701.0 l 3,-3 l 4,-6" /><path d="M 1511.0,701.0 l -5,-2 l -8,0" /><path d="M 1511.0,701.0 l 2,6 l 2,6" /><path d="M 1511.0,701.0 l 6,-1 l 5,-5" /></g></g>
<g><circle cx="1512.0" cy="739.7" r="14.5" fill="#888" opacity="0.5" filter="url(#bl08)"/><circle cx="1511.0" cy="738.7" r="14" fill="url(#tbOr)"/><circle cx="1511.0" cy="738.7" r="13.3" fill="none" stroke="#7040d0" stroke-width="1.4" opacity="0.9"/><path d="M 1504,733 C 1506,729 1510,728 1512,731 C 1515,733 1519,731 1519,735 C 1518,739 1516,740 1514,742 C 1511,744 1508,745 1506,742 C 1503,740 1502,736 1504,733 Z" fill="#000" stroke="#3080c0" stroke-width="0.6"/><g stroke="#6a8cb0" stroke-width="0.9" fill="none" opacity="0.85"><path d="M 1511.0,738.7 l 3,-3 l 4,-6" /><path d="M 1511.0,738.7 l -5,-2 l -8,0" /><path d="M 1511.0,738.7 l 2,6 l 2,6" /><path d="M 1511.0,738.7 l 6,-1 l 5,-5" /></g></g>
<path d="M 1553,702.5 L 1559.5,689 C 1567,688.5 1574,690.5 1578,694.5 C 1582,698.5 1583,704.5 1581.5,708.5 C 1580,712.5 1576,712.5 1572,711.5 C 1565,709.5 1558,706.5 1553,702.5 Z" fill="#444" opacity="0.35" filter="url(#bl08)"/>
<path d="M 1552,701 L 1558.5,687.5 C 1566,687 1573,689 1577,693 C 1581,697 1582,703 1580.5,707 C 1579,711 1575,711 1571,710 C 1564,708 1557,705 1552,701 Z" fill="url(#tbPu)"/>
<g fill="#000" stroke="#fff" stroke-width="1.3" stroke-linejoin="round">
<polygon points="1556.5,735 1563,728.5 1579.5,728.5 1579.5,745 1573,751.5 1556.5,751.5"/>
</g>
<g fill="none" stroke="#fff" stroke-width="1.1"><path d="M 1556.5,735 H 1573 V 751.5 M 1573,735 L 1579.5,728.5 M 1563,728.5 V 745 H 1579.5 M 1563,745 L 1556.5,751.5"/></g>
<circle cx="1512" cy="777.5" r="14.5" fill="#777" opacity="0.4" filter="url(#bl08)"/>
<circle cx="1511" cy="776.6" r="14" fill="url(#tbBl)"/>
<g stroke="#3a90ff" stroke-width="1.2" fill="none"><path d="M 1498,779 L 1507,778 L 1511,779 L 1512,774 L 1516,771 L 1519,764"/><path d="M 1511,779 L 1517,789"/></g>
</svg>

</body></html>
